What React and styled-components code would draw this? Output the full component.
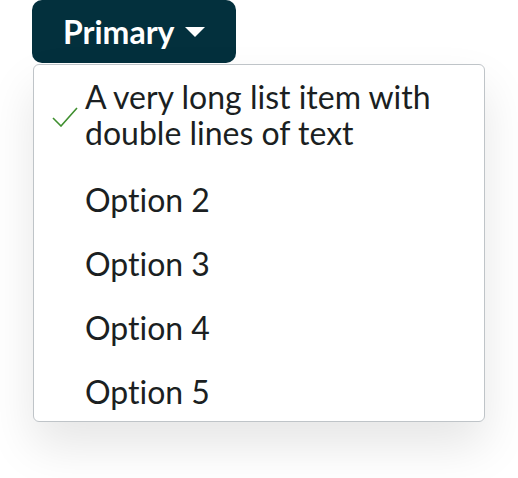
import React from "react";
import styled, { createGlobalStyle } from "styled-components";

const Global = createGlobalStyle`
  html, body { margin: 0; padding: 0; background: #ffffff; }
  body { font-family: Lato, "Noto Sans", sans-serif; }
`;

const Wrap = styled.div`
  box-sizing: border-box;
  min-height: 100vh;
  padding: 0 0 60px 32px;
  display: flex;
  flex-direction: column;
  align-items: flex-start;
`;

const Trigger = styled.button`
  display: flex;
  align-items: center;
  gap: 11px;
  height: 63px;
  padding: 0 31px 0 31px;
  border: none;
  border-radius: 10px;
  background: #03303d;
  color: #ffffff;
  font-family: Lato, sans-serif;
  font-weight: 700;
  font-size: 32px;
  font-variant-ligatures: none;
  cursor: pointer;
`;

const Menu = styled.ul`
  list-style: none;
  margin: 1px 0 0 1px;
  padding: 0;
  width: 450px;
  border: 1px solid #bfc4c8;
  border-radius: 6px;
  background: #ffffff;
  box-shadow: 0 24px 48px rgba(0, 0, 0, 0.1);
`;

const Item = styled.li`
  position: relative;
  padding: 14px 20px 14px 51px;
  font-size: 32px;
  line-height: 36px;
  font-variant-ligatures: none;
  color: #1b1f22;

  &:first-child { padding-bottom: 17px; }
  &:last-child { padding-bottom: 11px; }
`;

const Check = styled.svg`
  position: absolute;
  left: 18px;
  top: 42px;
`;

const items = [
  { label: "A very long list item with double lines of text", checked: true },
  { label: "Option 2" },
  { label: "Option 3" },
  { label: "Option 4" },
  { label: "Option 5" },
];

export default function App() {
  return (
    <>
      <Global />
      <Wrap>
        <Trigger>
          Primary
          <svg width="20" height="10" viewBox="0 0 20 10">
            <path d="M0 0 H20 L10 10 Z" fill="#ffffff" />
          </svg>
        </Trigger>
        <Menu>
          {items.map((it) => (
            <Item key={it.label}>
              {it.checked && (
                <Check width="26" height="20" viewBox="0 0 26 20">
                  <path d="M1 11 L9 19 L25 1" fill="none" stroke="#3f8f2f" strokeWidth="1.6" />
                </Check>
              )}
              {it.label}
            </Item>
          ))}
        </Menu>
      </Wrap>
    </>
  );
}
